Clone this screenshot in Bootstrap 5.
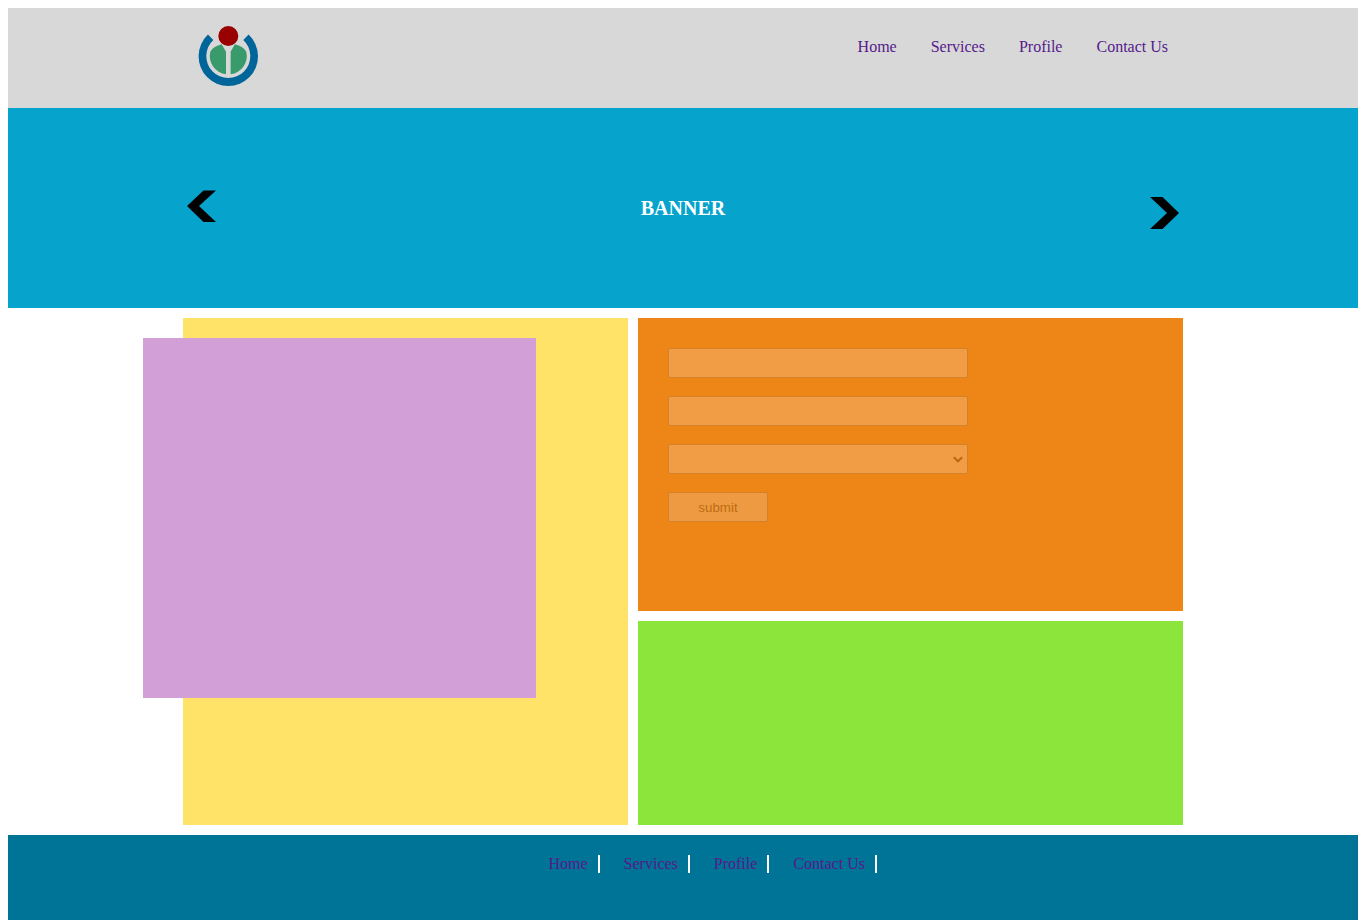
<!DOCTYPE html>
<html lang="en">
<head>
<meta charset="utf-8">
<title>Banner</title>
<link rel="stylesheet" href="https://cdn.jsdelivr.net/npm/bootstrap@5.3.0/dist/css/bootstrap.min.css">
<style>
body { margin: 8px 8px 0; font-family: "Liberation Serif", serif; font-size: 16px; background: #fff; }
.site-inner { width: 1000px; margin: 0 auto; }
.site-top { height: 100px; background: #d8d8d8; }
.site-top .site-inner { padding: 18px 15px 0; }
.logo-mark { width: 61px; height: 60px; display: block; }
.top-links { gap: 34px; margin: 12px 0 0; padding: 0; list-style: none; line-height: 18px; }
a.page-link-item { color: #551a8b; text-decoration: none; }
.site-banner { height: 200px; background: #06a3cc; }
.site-banner .site-inner { height: 100%; padding: 0 4px; }
.banner-title { color: #fff; font-size: 20px; font-weight: 700; margin: 0; line-height: 1; }
.arrow-mark { width: 29px; height: 32px; display: block; }
.arrow-prev { margin-top: -4px; }
.arrow-next { margin-top: 10px; }
.site-main { gap: 10px; padding: 10px 0; }
.panel-left { width: 445px; height: 507px; background: #ffe369; position: relative; }
.panel-float { position: absolute; left: -40px; top: 20px; width: 393px; height: 360px; background: #d39fd7; }
.panel-right { width: 545px; gap: 10px; }
.panel-form { height: 293px; background: #ed8517; padding: 30px; }
.panel-green { height: 204px; background: #8be53a; }
.ghost-form { gap: 18px; opacity: .2; }
.ghost-form .form-control, .ghost-form .form-select { width: 300px; height: 30px; min-height: 0; padding: 0 4px; border: 1px solid #767676; border-radius: 2px; background-color: #fff; box-shadow: none; }
.ghost-form .form-select { background-image: url("data:image/svg+xml,%3csvg xmlns='http://www.w3.org/2000/svg' viewBox='0 0 12 8'%3e%3cpath fill='none' stroke='%23000' stroke-width='2.6' d='M1 1.2l5 5 5-5'/%3e%3c/svg%3e"); background-position: right 4px center; background-size: 10px 7px; }
.ghost-form .btn { width: 100px; height: 30px; padding: 1px 0 0; border: 1px solid #767676; border-radius: 2px; background: #efefef; color: #000; font: 13.33px/1 "Liberation Sans", Arial, sans-serif; opacity: 1; }
.site-foot { height: 85px; background: #007496; padding-top: 20px; }
.foot-links { margin: 0; padding: 0 0 0 540.5px; list-style: none; line-height: 18px; }
.foot-links li { padding-right: 10px; border-right: 2px solid #fff; margin-right: 24px; }
</style>
</head>
<body>
<header class="site-top">
  <div class="site-inner d-flex justify-content-between align-items-start">
    <a href="#" aria-label="Home">
      <svg class="logo-mark" viewBox="0 0 61 60" aria-hidden="true">
        <path d="M10 8.6 A29.7 29.7 0 1 0 50.6 8.6 L45.3 14 A22 22 0 1 1 15.3 14 Z" fill="#006699"/>
        <circle cx="30.3" cy="10" r="10" fill="#990000"/>
        <path d="M28 48.3 V25.7 L23.7 18.3 C18.5 19.5 14.5 22 12.3 25.7 A18.5 18.5 0 0 0 28 48.3 Z" fill="#399a6b"/>
        <path d="M32.6 48.3 V25.7 L36.9 18.3 C42.1 19.5 46.1 22 48.3 25.7 A18.5 18.5 0 0 1 32.6 48.3 Z" fill="#399a6b"/>
      </svg>
    </a>
    <ul class="top-links d-flex">
      <li><a class="page-link-item" href="#">Home</a></li>
      <li><a class="page-link-item" href="#">Services</a></li>
      <li><a class="page-link-item" href="#">Profile</a></li>
      <li><a class="page-link-item" href="#">Contact Us</a></li>
    </ul>
  </div>
</header>
<section class="site-banner">
  <div class="site-inner d-flex justify-content-between align-items-center">
    <svg class="arrow-mark arrow-prev" viewBox="0 0 29 32" aria-hidden="true"><path d="M29 0.5 H16.5 L0 16 L16.5 32 H29 L12 16 Z" fill="#000"/></svg>
    <h1 class="banner-title">BANNER</h1>
    <svg class="arrow-mark arrow-next" viewBox="0 0 29 32" aria-hidden="true"><path d="M0 0 H12.5 L29 16 L12.5 32 H0 L17 16 Z" fill="#000"/></svg>
  </div>
</section>
<main class="site-inner site-main d-flex">
  <div class="panel-left"><div class="panel-float"></div></div>
  <div class="panel-right d-flex flex-column">
    <div class="panel-form">
      <form class="ghost-form d-flex flex-column align-items-start">
        <input class="form-control" type="text" aria-label="First field">
        <input class="form-control" type="text" aria-label="Second field">
        <select class="form-select" aria-label="Choice"><option></option></select>
        <button class="btn" type="button">submit</button>
      </form>
    </div>
    <div class="panel-green"></div>
  </div>
</main>
<footer class="site-foot">
  <ul class="foot-links d-flex">
    <li><a class="page-link-item" href="#">Home</a></li>
    <li><a class="page-link-item" href="#">Services</a></li>
    <li><a class="page-link-item" href="#">Profile</a></li>
    <li><a class="page-link-item" href="#">Contact Us</a></li>
  </ul>
</footer>
<script src="https://cdn.jsdelivr.net/npm/bootstrap@5.3.0/dist/js/bootstrap.bundle.min.js"></script>
</body>
</html>
